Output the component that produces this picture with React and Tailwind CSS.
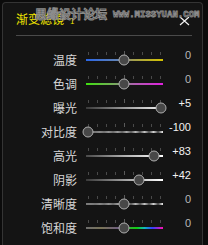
import React from "react";

const sliders = [
  { label: "温度", value: "0", pos: 38, track: "bg-[linear-gradient(90deg,#2a66e6,#5f82b8_40%,#8a8a82_50%,#a4a04c_62%,#d4c200)]" },
  { label: "色调", value: "0", pos: 38, track: "bg-[linear-gradient(90deg,#3fe010,#7aa860_38%,#8a8a8a_50%,#b060b0_62%,#e020e0)]" },
  { label: "曝光", value: "+5", pos: 75, track: "bg-[linear-gradient(90deg,#3a3a3a,#9a9a9a_50%,#f4f4f4)]" },
  { label: "对比度", value: "-100", pos: 2, track: "bg-[linear-gradient(90deg,#7a7a7a,rgba(122,122,122,0.7)_40%,rgba(122,122,122,0)),repeating-linear-gradient(90deg,#3a3a3a_0,#e0e0e0_4.5px,#3a3a3a_9px)]" },
  { label: "高光", value: "+83", pos: 68, track: "bg-[linear-gradient(90deg,#4a4a4a,#b0b0b0_50%,#ffffff)]" },
  { label: "阴影", value: "+42", pos: 53, track: "bg-[linear-gradient(90deg,#3a3a3a,#a0a0a0_50%,#ffffff)]" },
  { label: "清晰度", value: "0", pos: 38, track: "bg-[linear-gradient(90deg,#7a7a7a,rgba(122,122,122,0.7)_40%,rgba(122,122,122,0)),repeating-linear-gradient(90deg,#3a3a3a_0,#e0e0e0_4.5px,#3a3a3a_9px)]" },
  { label: "饱和度", value: "0", pos: 38, track: "bg-[linear-gradient(90deg,#6e6e6e,#7a7458_20%,#6e5e7e_42%,#3aa83a_55%,#10d010_66%,#10b8c0_76%,#3040ff_86%,#ff10b0)]" },
];

const Ticks = () => (
  <div className="absolute left-[2px] top-[-8px] flex w-[73px] items-end justify-between">
    {Array.from({ length: 9 }).map((_, i) => (
      <div key={i} className={i === 4 ? "h-[4px] w-px bg-[#5a5a5a]" : "h-[3px] w-px bg-[#4a4a4a]"} />
    ))}
  </div>
);

const SliderRow = ({ label, value, pos, track }) => (
  <div className="flex h-[24px] items-center">
    <div className="w-[74px] text-right text-[12px] leading-none text-[#d6d6d6]">{label}</div>
    <div className="relative ml-[9px] h-[2px] w-[77px]">
      <Ticks />
      <div className={`h-[2px] w-full ${track}`} />
      <div
        className="absolute top-1/2 h-[11px] w-[11px] -translate-x-1/2 -translate-y-1/2 rounded-full border-[1.5px] border-[#aeaeae] bg-[#484848]"
        style={{ left: pos }}
      />
    </div>
    <div
      className={`mb-[10px] w-[28px] text-right font-['Liberation_Sans',sans-serif] text-[11px] leading-none ${
        value === "0" ? "text-[#b8b8b8]" : "text-[#f2f2f2]"
      }`}
    >
      {value}
    </div>
  </div>
);

export default function App() {
  return (
    <div className="relative h-[245px] w-[208px] overflow-hidden bg-[#0b0b0b] pl-[2px] pt-[2px] font-['Noto_Sans_CJK_SC',sans-serif]">
      <div className="h-[260px] w-[201px] rounded-t-[4px] border border-b-0 border-[#343434] bg-[#141414]">
        <div className="flex h-[32px] items-center justify-between pl-[13px] pr-[12px]">
          <div className="flex items-center text-[12px] leading-none text-[#f2e600]">
            渐变滤镜
            <span className="ml-[6px] mt-[3px] text-[8px]">1</span>
          </div>
          <svg width="11" height="10" viewBox="0 0 11 10" className="mt-[3px]">
            <path d="M1 1L10 9M10 1L1 9" stroke="#f0f0f0" strokeWidth="1.2" />
          </svg>
        </div>
        <div className="ml-[13px] h-px w-[176px] bg-[#4a4a4a]" />
        <div className="mt-[12px] flex flex-col">
          {sliders.map((s) => (
            <SliderRow key={s.label} {...s} />
          ))}
        </div>
      </div>

      {/* watermark */}
      <div className="pointer-events-none absolute left-[35px] top-[7px] flex items-center gap-[6px]">
        <span className="text-[12px] font-bold leading-none tracking-[0px] text-[#242424] [-webkit-text-stroke:1px_#8c8c8c]">
          思缘设计论坛
        </span>
        <span className="mt-[4px] font-['Liberation_Mono',monospace] text-[9px] font-bold leading-none text-[#242424] [-webkit-text-stroke:0.8px_#8c8c8c]">
          WWW.MISSYUAN.COM
        </span>
      </div>
    </div>
  );
}
